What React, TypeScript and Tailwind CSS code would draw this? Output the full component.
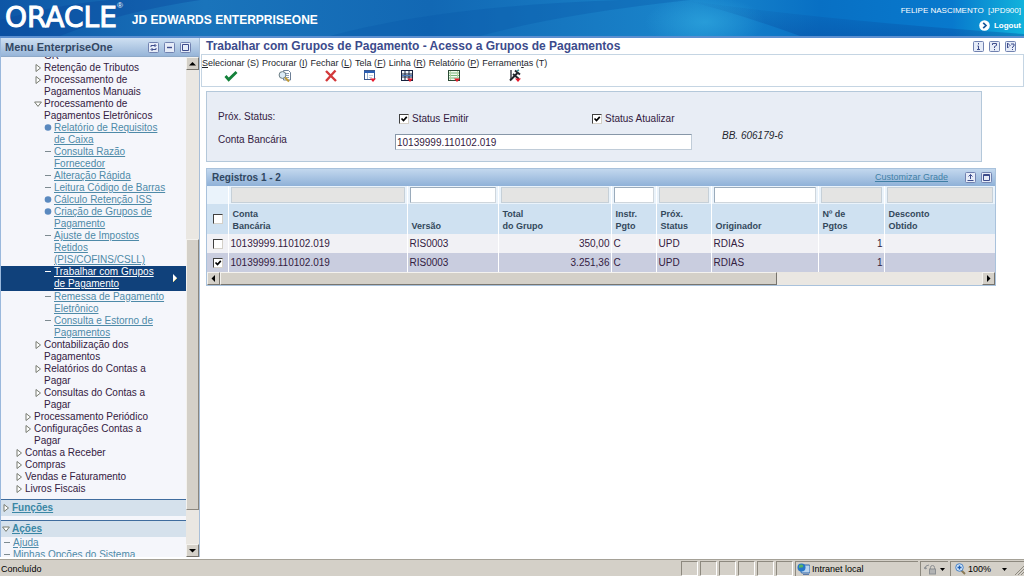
import { useState } from "react";
import type { ReactNode } from "react";

type TreeItem = {
  level: number;
  kind: "closed" | "open" | "dot" | "dash" | "none";
  lines: string[];
  selected?: boolean;
};

const tree: TreeItem[] = [
  { level: 3, kind: "none", lines: ["GR"] },
  { level: 3, kind: "closed", lines: ["Retenção de Tributos"] },
  { level: 3, kind: "closed", lines: ["Processamento de", "Pagamentos Manuais"] },
  { level: 3, kind: "open", lines: ["Processamento de", "Pagamentos Eletrônicos"] },
  { level: 4, kind: "dot", lines: ["Relatório de Requisitos", "de Caixa"] },
  { level: 4, kind: "dash", lines: ["Consulta Razão", "Fornecedor"] },
  { level: 4, kind: "dash", lines: ["Alteração Rápida"] },
  { level: 4, kind: "dash", lines: ["Leitura Código de Barras"] },
  { level: 4, kind: "dot", lines: ["Cálculo Retenção ISS"] },
  { level: 4, kind: "dot", lines: ["Criação de Grupos de", "Pagamento"] },
  { level: 4, kind: "dash", lines: ["Ajuste de Impostos", "Retidos", "(PIS/COFINS/CSLL)"] },
  { level: 4, kind: "dash", lines: ["Trabalhar com Grupos", "de Pagamento"], selected: true },
  { level: 4, kind: "dash", lines: ["Remessa de Pagamento", "Eletrônico"] },
  { level: 4, kind: "dash", lines: ["Consulta e Estorno de", "Pagamentos"] },
  { level: 3, kind: "closed", lines: ["Contabilização dos", "Pagamentos"] },
  { level: 3, kind: "closed", lines: ["Relatórios do Contas a", "Pagar"] },
  { level: 3, kind: "closed", lines: ["Consultas do Contas a", "Pagar"] },
  { level: 2, kind: "closed", lines: ["Processamento Periódico"] },
  { level: 2, kind: "closed", lines: ["Configurações Contas a", "Pagar"] },
  { level: 1, kind: "closed", lines: ["Contas a Receber"] },
  { level: 1, kind: "closed", lines: ["Compras"] },
  { level: 1, kind: "closed", lines: ["Vendas e Faturamento"] },
  { level: 1, kind: "closed", lines: ["Livros Fiscais"] },
];

const indent: Record<number, string> = {
  1: "pl-[14px]",
  2: "pl-[23px]",
  3: "pl-[33px]",
  4: "pl-[43px]",
};

const columns = [
  { title: ["Conta", "Bancária"], filter: false },
  { title: ["Versão"], filter: true },
  { title: ["Total", "do Grupo"], filter: false },
  { title: ["Instr.", "Pgto"], filter: true },
  { title: ["Próx.", "Status"], filter: false },
  { title: ["Originador"], filter: true },
  { title: ["Nº de", "Pgtos"], filter: false },
  { title: ["Desconto", "Obtido"], filter: false },
];

const rows = [
  ["10139999.110102.019", "RIS0003", "350,00", "C", "UPD", "RDIAS", "1", ""],
  ["10139999.110102.019", "RIS0003", "3.251,36", "C", "UPD", "RDIAS", "1", ""],
];

const Marker = ({ kind, light }: { kind: TreeItem["kind"]; light?: boolean }) => (
  <svg width="8" height="12" viewBox="0 0 8 12" fill="none" className="shrink-0">
    {kind === "closed" && <path d="M2 2.5v7L6.5 6z" fill="#fff" stroke="#777b70" />}
    {kind === "open" && <path d="M.6 4h6.8L4 8.4z" fill="#fff" stroke="#777b70" />}
    {kind === "dot" && <circle cx="4" cy="5.5" r="3.3" fill="#5a89bf" />}
    {kind === "dash" && <path d="M1 5.5h6" stroke={light ? "#fff" : "#7d8a90"} />}
  </svg>
);

const TreeRow = ({ item }: { item: TreeItem }) => {
  const leaf = item.level === 4;
  const text = item.lines.map((line) => (
    <span key={line} className="block">
      {line}
    </span>
  ));

  return (
    <li className={`flex gap-[2px] ${indent[item.level]} ${item.selected ? "bg-[#10417b] pb-px" : ""}`}>
      <Marker kind={item.kind} light={item.selected} />
      {leaf ? (
        <a href="#" className={`underline ${item.selected ? "text-white" : "text-[#4e8aa8]"}`}>
          {text}
        </a>
      ) : (
        <button type="button" className="text-left text-[#33203f]">
          {text}
        </button>
      )}
      {item.selected && (
        <svg width="5" height="8" viewBox="0 0 5 8" className="mr-[8px] ml-auto self-center">
          <path d="M0 0v8l4-4z" fill="#fff" />
          <path d="M0 8l4-4" stroke="#e7d98b" />
        </svg>
      )}
    </li>
  );
};

const IconButton = ({ label, children }: { label: string; children: ReactNode }) => (
  <button type="button" aria-label={label} className="shrink-0">
    <svg width="11" height="11" viewBox="0 0 11 11" fill="none" stroke="#3d4c8c">
      <rect x=".5" y=".5" width="10" height="10" rx="1" fill="#e6ecf8" stroke="#7182b0" />
      {children}
    </svg>
  </button>
);

const CheckBox = ({ id, label, defaultChecked }: { id?: string; label?: string; defaultChecked?: boolean }) => (
  <span className="relative block h-[10px] w-[10px] shrink-0">
    <input
      id={id}
      type="checkbox"
      aria-label={label}
      defaultChecked={defaultChecked}
      className="peer block h-[10px] w-[10px] appearance-none border border-t-[#404040] border-r-[#d4d0c8] border-b-[#d4d0c8] border-l-[#404040] bg-white"
    />
    <svg viewBox="0 0 10 10" className="pointer-events-none absolute inset-0 hidden h-[10px] w-[10px] peer-checked:block">
      <path d="M2.5 4.5l2 2 3.3-3.6" fill="none" stroke="#000" strokeWidth="1.7" />
    </svg>
  </span>
);

const ScrollButton = ({ label, d }: { label: string; d: string }) => (
  <button
    type="button"
    aria-label={label}
    className="flex h-[13px] w-[13px] shrink-0 items-center justify-center border border-t-[#f4f2ee] border-r-[#77746e] border-b-[#77746e] border-l-[#f4f2ee] bg-[#d4d0c8]"
  >
    <svg width="7" height="7" viewBox="0 0 7 7">
      <path d={d} fill="#000" />
    </svg>
  </button>
);

const RedArrow = () => <path d="M7 9.5h6L10 13z" fill="#e8192c" />;

const tools = [
  {
    before: "",
    hot: "S",
    after: "elecionar (S)",
    icon: <path d="M1.5 7l3.2 3.6L12.5 3" fill="none" stroke="#14813a" strokeWidth="2.8" />,
  },
  {
    before: "Procurar (",
    hot: "I",
    after: ")",
    icon: (
      <>
        <path d="M5.5 1.5h5l2 2v7.5h-7z" fill="#fff" stroke="#6d7f96" />
        <path d="M7 4.5h4M8 6.5h3M8 8.5h3" stroke="#8d9fb8" />
        <circle cx="4.5" cy="6" r="3.4" fill="#dcebf6" stroke="#697b82" />
        <path d="M7 8.5l4 4" stroke="#c09a35" strokeWidth="2" />
      </>
    ),
  },
  {
    before: "Fechar (",
    hot: "L",
    after: ")",
    icon: <path d="M2 2l10 10M11.5 1.5L2 12" fill="none" stroke="#d3393b" strokeWidth="2.4" />,
  },
  {
    before: "Tela (",
    hot: "F",
    after: ")",
    icon: (
      <>
        <rect x="1.5" y="1.5" width="10" height="9" fill="#fff" stroke="#39578d" />
        <path d="M1 3h11" stroke="#2c5fb3" strokeWidth="2" />
        <path d="M4.5 4v6" stroke="#9bb3d4" />
        <path d="M6 6.5h4M6 8.5h3" stroke="#c3cddd" />
        <RedArrow />
      </>
    ),
  },
  {
    before: "Linha (",
    hot: "R",
    after: ")",
    icon: (
      <>
        <rect x="1.5" y="1.5" width="11" height="10" fill="#f2f7fb" stroke="#17223f" />
        <path d="M2 5h10M2 8h10M5 2v9M9 2v9" stroke="#17223f" />
        <path d="M2 6.5h10" stroke="#4f7fc0" />
        <RedArrow />
      </>
    ),
  },
  {
    before: "Relatório (",
    hot: "P",
    after: ")",
    icon: (
      <>
        <rect x="1.5" y="1.5" width="11" height="10" fill="#f2faee" stroke="#2b4a35" />
        <path d="M2 4h10M2 6.5h10M2 9h10" stroke="#77b77d" />
        <path d="M3.5 2v9M10.5 2v9" stroke="#b5d3a7" />
        <RedArrow />
      </>
    ),
  },
  {
    before: "Ferramen",
    hot: "t",
    after: "as (T)",
    icon: (
      <>
        <path d="M3 1v10" stroke="#42464c" strokeWidth="1.5" />
        <path d="M2 11.5L9.5 4" stroke="#202329" strokeWidth="2" />
        <path d="M7 1.5l5 4M5 5l6 5" stroke="#24282e" strokeWidth="2" />
        <path d="M9 2l2-1" stroke="#3e9095" strokeWidth="1.5" />
        <RedArrow />
      </>
    ),
  },
];

const Header = () => (
  <header className="relative flex h-9 shrink-0 items-center justify-between overflow-hidden bg-[#0a63b0] text-white">
    <svg className="absolute inset-0 h-full w-full" viewBox="0 0 1024 36" preserveAspectRatio="none">
      <defs>
        <linearGradient id="sky" x2="1">
          <stop offset="0" stopColor="#0d56a6" />
          <stop offset=".2" stopColor="#1a74bb" />
          <stop offset=".42" stopColor="#1268b4" />
          <stop offset=".68" stopColor="#1a86cc" />
          <stop offset=".8" stopColor="#0870c4" />
          <stop offset=".93" stopColor="#0879cd" />
          <stop offset="1" stopColor="#11b3dc" />
        </linearGradient>
        <linearGradient id="shade" x2="0" y2="1">
          <stop offset="0" stopColor="#0a4a9a" stopOpacity="0" />
          <stop offset="1" stopColor="#07479c" stopOpacity=".4" />
        </linearGradient>
        <radialGradient id="glow">
          <stop offset="0" stopColor="#2ea6de" stopOpacity=".7" />
          <stop offset="1" stopColor="#2ea6de" stopOpacity="0" />
        </radialGradient>
      </defs>
      <path d="M0 0h1024v36H0z" fill="url(#sky)" />
      <path d="M0 20Q60 4 110 0h90Q120 12 60 36H0z" fill="#0a459b" opacity=".35" />
      <path d="M330 36Q440 6 620 0h70Q560 14 480 36z" fill="#0a58a8" opacity=".35" />
      <ellipse cx="705" cy="22" rx="60" ry="26" fill="url(#glow)" />
      <path d="M684 0Q820 20 1024 34v2H800Q740 14 684 0z" fill="url(#shade)" />
    </svg>
    <div className="relative flex items-center pl-[5px]">
      <span className="font-['DejaVu_Sans'] text-[28px] leading-7 [-webkit-text-stroke:1px_white]">ORACLE</span>
      <sup className="self-start text-[8px] leading-3">®</sup>
      <h1 className="mt-1 ml-[9px] text-[12px] leading-4 font-bold">JD EDWARDS ENTERPRISEONE</h1>
    </div>
    <div className="relative flex flex-col items-end gap-[3px] pr-[3px] text-[8px] leading-3">
      <p className="whitespace-pre">FELIPE NASCIMENTO  [JPD900]</p>
      <a href="#" className="flex items-center gap-1 font-bold">
        <svg width="11" height="11" viewBox="0 0 11 11">
          <circle cx="5.5" cy="5.5" r="5.3" fill="#fff" />
          <path d="M4.200 2.800l2.800 2.700-2.800 2.700" fill="none" stroke="#14579b" strokeWidth="1.7" />
        </svg>
        Logout
      </a>
    </div>
  </header>
);

const Sidebar = () => (
  <aside className="mb-[2px] flex w-[200px] shrink-0 flex-col border-x border-r-[#a9bfd8] border-l-[#9ab8dc] bg-[#f5f6fb]">
    <div className="flex h-[19px] shrink-0 items-center gap-[5px] border-b border-[#8ea9c8] bg-linear-to-b from-[#cfe0f2] to-[#97b5d8] pr-2 pl-1">
      <h2 className="mr-auto text-[11px] font-bold text-[#334763]">Menu EnterpriseOne</h2>
      <IconButton label="Atualizar">
        <path d="M3 5V3.500h4.500M6.500 2l1.500 1.500L6.500 5M8 6v1.500H3.500M4.500 6L3 7.500 4.500 9" />
      </IconButton>
      <IconButton label="Minimizar">
        <path d="M3 5.500h5" strokeWidth="1.4" />
      </IconButton>
      <IconButton label="Maximizar">
        <path d="M2.500 2.500h6v6h-6z" />
      </IconButton>
    </div>
    <div className="flex min-h-0 flex-1">
      <div className="min-w-0 flex-1 overflow-hidden text-[10px] leading-3">
        <nav>
          <ul className="-mt-[7px]">
            {tree.map((item, i) => (
              <TreeRow key={i} item={item} />
            ))}
          </ul>
        </nav>
        <div className="mt-1 flex h-[17px] items-center gap-[2px] border-t border-[#3f6c9e] bg-[#d5e1ec] pl-px">
          <Marker kind="closed" />
          <a href="#" className="font-bold text-[#3a87a5] underline">
            Funções
          </a>
        </div>
        <div className="mt-1 flex h-[17px] items-center gap-[2px] border-t border-[#3f6c9e] bg-[#d5e1ec] pl-px">
          <Marker kind="open" />
          <a href="#" className="font-bold text-[#3a87a5] underline">
            Ações
          </a>
        </div>
        <ul className="text-[#4e8aa8]">
          {["Ajuda", "Minhas Opções do Sistema"].map((action) => (
            <li key={action} className="flex gap-[2px] pl-[2px]">
              <Marker kind="dash" />
              <a href="#" className="underline">
                {action}
              </a>
            </li>
          ))}
        </ul>
      </div>
      <div className="flex w-[13px] shrink-0 flex-col bg-[#eae7e2]">
        <ScrollButton label="Rolar para cima" d="M3.500 2L7 5.500H0z" />
        <div className="flex-[170]" />
        <div className="flex-[271] border border-t-[#f4f2ee] border-r-[#8a867e] border-b-[#8a867e] border-l-[#f4f2ee] bg-[#d4d0c8]" />
        <div className="flex-[34]" />
        <ScrollButton label="Rolar para baixo" d="M3.500 5.500L0 2h7z" />
      </div>
    </div>
  </aside>
);

const Toolbar = () => (
  <div className="flex gap-[3px] border border-[#c5d5e3] pb-[3px] text-[9px] leading-3 text-[#23262d]">
    {tools.map((tool) => (
      <button key={tool.before + tool.hot} type="button" className="flex flex-col items-center pt-[2px]">
        <span>
          {tool.before}
          <span className="underline">{tool.hot}</span>
          {tool.after}
        </span>
        <svg width="14" height="14" viewBox="0 0 14 14">
          {tool.icon}
        </svg>
      </button>
    ))}
  </div>
);

const FilterForm = () => (
  <form className="mt-1 mr-[42px] ml-[5px] flex h-[71px] flex-col gap-[3px] border border-[#b4c8da] bg-[#e8edf5] pt-[19px] pl-[11px] text-[10px] leading-3 text-[#33203f]">
    <div className="flex items-start">
      <span className="w-[181px]">Próx. Status:</span>
      <div className="flex h-4 w-[193px] items-center gap-[3px]">
        <CheckBox id="emitir" defaultChecked />
        <label htmlFor="emitir">Status Emitir</label>
      </div>
      <div className="flex h-4 items-center gap-[3px]">
        <CheckBox id="atualizar" defaultChecked />
        <label htmlFor="atualizar">Status Atualizar</label>
      </div>
    </div>
    <div className="flex items-start">
      <label htmlFor="conta" className="w-[177px] pt-1">
        Conta Bancária
      </label>
      <input
        id="conta"
        defaultValue="10139999.110102.019"
        className="mt-1 h-4 w-[297px] border border-t-[#8797a8] border-r-[#c0ccd8] border-b-[#c0ccd8] border-l-[#8797a8] bg-white px-px"
      />
      <span className="ml-[30px] text-[#23262d] italic">BB. 606179-6</span>
    </div>
  </form>
);

const DataGrid = () => {
  const [selected, setSelected] = useState(1);

  return (
    <section className="mt-[6px] mr-7 ml-[5px] border border-[#a9c2dc]">
      <div className="flex h-[17px] items-center bg-linear-to-b from-[#c3d8ee] to-[#8fb1d8] pr-[3px] pl-[5px]">
        <h3 className="mr-auto text-[10px] font-bold text-[#2f4660]">Registros 1 - 2</h3>
        <a href="#" className="mr-[17px] text-[9px] text-[#3f7fa6] underline">
          Customizar Grade
        </a>
        <div className="flex gap-[5px]">
          <IconButton label="Exportar">
            <path d="M5.500 7V2.500M3.500 4.500l2-2 2 2M2.500 8.500h6" />
          </IconButton>
          <IconButton label="Maximizar grade">
            <path d="M2.500 2.500h6v6h-6zM2.500 3.500h6" />
          </IconButton>
        </div>
      </div>
      <table className="w-full table-fixed border-collapse text-[10px] leading-3 text-[#33203f]">
        <colgroup>
          <col className="w-[21px]" />
          <col className="w-[179px]" />
          <col className="w-[91px]" />
          <col className="w-[113px]" />
          <col className="w-[45px]" />
          <col className="w-[55px]" />
          <col className="w-[107px]" />
          <col className="w-[66px]" />
          <col />
        </colgroup>
        <thead className="text-left text-[9px] text-[#33485c]">
          <tr className="h-[18px] bg-[#eaf3fb]">
            <td />
            {columns.map((col) => (
              <td key={col.title[0]} className="border-l border-white px-[2px]">
                <input
                  aria-label={`Filtro ${col.title.join(" ")}`}
                  disabled={!col.filter}
                  className="block h-4 w-full border border-t-[#9aabbb] border-r-[#cfd6dc] border-b-[#cfd6dc] border-l-[#9aabbb] bg-white px-[2px] disabled:border-[#c6d0d8] disabled:bg-[#e4e4e3]"
                />
              </td>
            ))}
          </tr>
          <tr className="h-[30px] bg-[#cfe1f1]">
            <th className="pl-[6px]">
              <CheckBox label="Selecionar todos" />
            </th>
            {columns.map((col) => (
              <th key={col.title[0]} className="border-l border-white pb-[2px] pl-1 align-bottom font-bold">
                {col.title.map((line) => (
                  <span key={line} className="block">
                    {line}
                  </span>
                ))}
              </th>
            ))}
          </tr>
        </thead>
        <tbody>
          {rows.map((row, i) => (
            <tr
              key={i}
              onClick={() => setSelected(i)}
              className={`h-[19px] ${i === selected ? "bg-[#c9cddf]" : "bg-[#f1f1f5]"}`}
            >
              <td className="pl-[6px]">
                <CheckBox label={`Selecionar linha ${i + 1}`} defaultChecked={i === 1} />
              </td>
              {row.map((cell, j) => (
                <td key={j} className={`border-l border-white pr-px pl-[2px] ${j === 2 || j === 6 ? "text-right" : ""}`}>
                  {cell}
                </td>
              ))}
            </tr>
          ))}
        </tbody>
      </table>
      <div className="flex bg-[#eae7e2]">
        <ScrollButton label="Rolar para a esquerda" d="M1.500 3.500L5 0v7z" />
        <div className="flex-[556] border border-t-[#f4f2ee] border-r-[#77746e] border-b-[#77746e] border-l-[#f4f2ee] bg-[#d4d0c8]" />
        <div className="flex-[206]" />
        <ScrollButton label="Rolar para a direita" d="M5.500 3.500L2 0v7z" />
      </div>
    </section>
  );
};

const StatusBar = () => (
  <footer className="flex h-[17px] shrink-0 items-stretch gap-[2px] border-t border-[#a5a197] bg-[#d4d0c8] pt-px text-[9px] leading-4 text-black">
    <span className="flex-1 pl-px">Concluído</span>
    {[0, 1, 2, 3, 4, 5].map((i) => (
      <span key={i} className="w-[17px] border border-t-[#8d897f] border-r-white border-b-white border-l-[#8d897f]" />
    ))}
    <span className="flex w-[123px] items-center gap-[2px] border-t border-l border-[#8d897f] pl-px">
      <svg width="13" height="12" viewBox="0 0 13 12">
        <rect x="4" y="2" width="9" height="8" rx="1" fill="#b9d4ee" stroke="#3167a9" />
        <circle cx="4.5" cy="4.5" r="4" fill="#2676c8" />
        <path d="M2 2.500q3-2 4 0t-2 2-2 3z" fill="#58b462" />
        <path d="M6 11.500h6" stroke="#5b79a6" />
      </svg>
      Intranet local
    </span>
    <button type="button" aria-label="Segurança" className="flex w-[28px] items-center gap-1 border-t border-l border-[#8d897f] pl-[3px]">
      <svg width="12" height="12" viewBox="0 0 12 12" fill="none" stroke="#8c8f92">
        <path d="M1 6a4 4 0 014-4M1 6l-1-2M1 6l2-1" />
        <path d="M6.500 6V4.500a2 2 0 014 0V6" />
        <rect x="5.5" y="6" width="6" height="5" fill="#b2b3b3" />
      </svg>
      <svg width="5" height="3" viewBox="0 0 5 3">
        <path d="M0 0h5L2.500 3z" fill="#000" />
      </svg>
    </button>
    <button type="button" aria-label="Alterar nível de zoom" className="flex w-[74px] items-center gap-[2px] border-t border-l border-[#8d897f] pl-1">
      <svg width="11" height="12" viewBox="0 0 11 12">
        <path d="M6 7l4 4" stroke="#8a7a55" strokeWidth="2" />
        <circle cx="4.5" cy="4.5" r="3.8" fill="#cfe4f8" stroke="#4a83c6" />
        <path d="M2.500 4.500h4M4.500 2.500v4" stroke="#1d5db3" strokeWidth="1.3" />
      </svg>
      100%
      <svg width="5" height="3" viewBox="0 0 5 3" className="ml-[9px]">
        <path d="M0 0h5L2.500 3z" fill="#000" />
      </svg>
      <svg width="9" height="12" viewBox="0 0 9 12" className="ml-auto" stroke="#8d897f">
        <path d="M0 12l9-9M3 12l6-6M6 12l3-3" />
      </svg>
    </button>
  </footer>
);

const App = () => (
  <div className="flex h-screen flex-col overflow-hidden bg-white font-['Liberation_Sans',Arial,sans-serif]">
    <Header />
    <div className="flex min-h-0 flex-1 border-t-2 border-[#5c8fd0]">
      <Sidebar />
      <main className="min-w-0 flex-1 pl-px">
        <div className="flex h-4 items-center pr-2 pl-[5px]">
          <h2 className="mr-auto text-[12px] leading-4 font-bold text-[#3c4b8c]">
            Trabalhar com Grupos de Pagamento - Acesso a Grupos de Pagamentos
          </h2>
          <div className="flex gap-[5px]">
            <IconButton label="Informações">
              <path d="M5.500 2v1.500M4.500 5h1v3.500M4 8.500h3" />
            </IconButton>
            <IconButton label="Ajuda">
              <path d="M3.500 4V2.500h4v2l-2 1V7M5.500 8v1.200" />
            </IconButton>
            <IconButton label="Ajuda do item">
              <path d="M2.500 2v5l1.500-1.500M2.500 2l3 3M6 3h3v2L7.500 6v1M7.500 8v1" />
            </IconButton>
          </div>
        </div>
        <Toolbar />
        <FilterForm />
        <DataGrid />
      </main>
    </div>
    <StatusBar />
  </div>
);

export default App;
